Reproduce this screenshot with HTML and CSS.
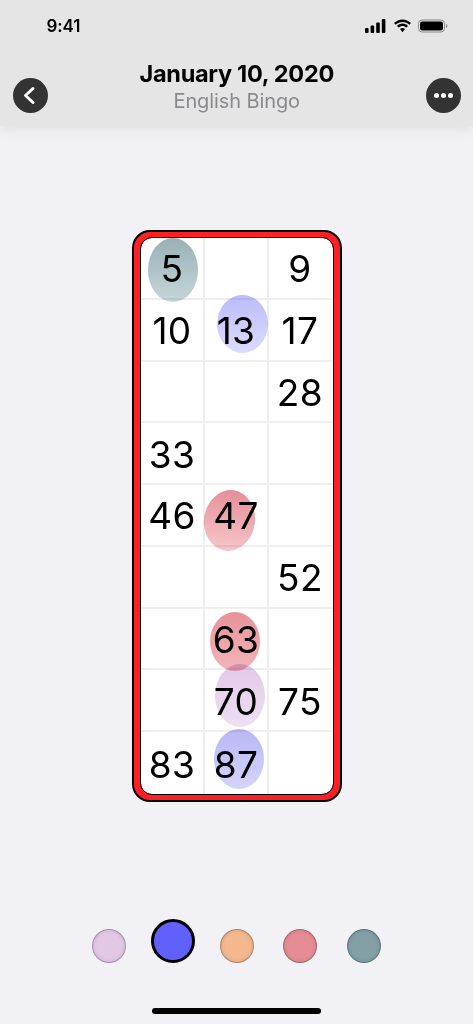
FILE: index.html
```html
<!DOCTYPE html>
<html lang="en">
<head>
<meta charset="utf-8">
<title>English Bingo</title>
<link rel="stylesheet" href="styles.css">
</head>
<body>
<div class="app">
  <header class="header">
    <div class="status">
      <span class="time">9:41</span>
      <span class="status-icons">
        <svg class="signal" width="21" height="14" viewBox="0 0 21 14"><rect x="0" y="9" width="3.6" height="5" rx="1"/><rect x="5.600" y="6.500" width="3.6" height="7.500" rx="1"/><rect x="11.200" y="3.500" width="3.6" height="10.500" rx="1"/><rect x="16.800" y="0" width="3.6" height="14" rx="1"/></svg>
        <svg class="wifi" width="19" height="14" viewBox="0 0 19 14"><path d="M9.500 3c2.600 0 5 1 6.800 2.800L18 4.100C15.800 1.800 12.800.4 9.500.4S3.200 1.800 1 4.100l1.700 1.700C4.500 4 6.900 3 9.500 3z"/><path d="M9.500 7.100c1.500 0 2.800.6 3.800 1.500l1.700-1.700C13.500 5.500 11.600 4.600 9.500 4.600S5.500 5.500 4 6.900l1.700 1.700c1-.9 2.300-1.500 3.800-1.500z"/><path d="M9.500 9.100c-1 0-1.800.4-2.400 1l2.400 3.100 2.400-3.100c-.6-.6-1.400-1-2.400-1z"/></svg>
        <svg class="battery" width="30" height="14" viewBox="0 0 30 14"><rect x=".5" y="1" width="26" height="12" rx="3.600" fill="none" stroke="#8a8a8a"/><rect x="2" y="2.500" width="23" height="9" rx="2.300"/><path d="M28 5v4c.8-.3 1.400-1.100 1.400-2S28.800 5.300 28 5z" fill="#8a8a8a"/></svg>
      </span>
    </div>
    <div class="nav">
      <button class="round-btn" aria-label="Back">
        <svg width="35" height="35" viewBox="0 0 35 35"><path d="M20 10.500l-7.500 7 7.500 7" fill="none" stroke="#fff" stroke-width="3" stroke-linecap="round" stroke-linejoin="round"/></svg>
      </button>
      <div class="titles">
        <div class="title">January 10, 2020</div>
        <div class="subtitle">English Bingo</div>
      </div>
      <button class="round-btn" aria-label="More">
        <svg width="35" height="35" viewBox="0 0 35 35"><circle cx="10.500" cy="17.500" r="2.500" fill="#fff"/><circle cx="17.500" cy="17.500" r="2.500" fill="#fff"/><circle cx="24.500" cy="17.500" r="2.500" fill="#fff"/></svg>
      </button>
    </div>
  </header>

  <main class="main">
    <div class="card">
      <div class="card-inner">
        <div class="board">
          <div class="cell">5</div><div class="cell"></div><div class="cell">9</div>
          <div class="cell">10</div><div class="cell">13</div><div class="cell">17</div>
          <div class="cell"></div><div class="cell"></div><div class="cell">28</div>
          <div class="cell">33</div><div class="cell"></div><div class="cell"></div>
          <div class="cell">46</div><div class="cell">47</div><div class="cell"></div>
          <div class="cell"></div><div class="cell"></div><div class="cell">52</div>
          <div class="cell"></div><div class="cell">63</div><div class="cell"></div>
          <div class="cell"></div><div class="cell">70</div><div class="cell">75</div>
          <div class="cell">83</div><div class="cell">87</div><div class="cell"></div>
          <span class="stain stain-5"></span>
          <span class="stain stain-13"></span>
          <span class="stain stain-47"></span>
          <span class="stain stain-63"></span>
          <span class="stain stain-70"></span>
          <span class="stain stain-87"></span>
        </div>
      </div>
    </div>
  </main>

  <div class="palette">
    <span class="swatch swatch-lilac"></span>
    <span class="swatch swatch-blue"></span>
    <span class="swatch swatch-peach"></span>
    <span class="swatch swatch-rose"></span>
    <span class="swatch swatch-teal"></span>
  </div>
  <div class="home"><span class="home-bar"></span></div>
</div>
</body>
</html>
```
FILE: styles.css
```css
* { box-sizing: border-box; }
html, body { margin: 0; padding: 0; }
body {
  background: #f1f1f6;
  font-family: Inter, "Liberation Sans", sans-serif;
  color: #000;
}
.app {
  width: 473px;
  height: 1024px;
  display: flex;
  flex-direction: column;
  overflow: hidden;
}
.header {
  height: 126px;
  background: #e5e5e5;
  box-shadow: 0 1px 14px rgba(0,0,0,.10);
  display: flex;
  flex-direction: column;
  flex: none;
}
.status {
  height: 58px;
  flex: none;
  padding: 16px 25px 0 46.500px;
  display: flex;
  justify-content: space-between;
  align-items: flex-start;
}
.time {
  font-size: 17px;
  font-weight: 600;
  line-height: 21px;
  letter-spacing: -.1px;
}
.status-icons {
  display: flex;
  align-items: center;
  height: 20px;
}
.status-icons svg { display: block; fill: #000; }
.status-icons .wifi { margin-left: 7px; margin-right: 6px; }
.nav {
  display: flex;
  justify-content: space-between;
  align-items: flex-end;
  padding: 0 12px 15px 12.500px;
  flex: 1;
}
.round-btn {
  width: 35px;
  height: 35px;
  border: 0;
  padding: 0;
  border-radius: 50%;
  background: #333;
  display: block;
}
.round-btn svg { display: block; }
.titles {
  text-align: center;
  align-self: flex-start;
}
.title {
  font-size: 23.500px;
  font-weight: 700;
  line-height: 28px;
  letter-spacing: -.3px;
  margin-top: 2px;
}
.subtitle {
  font-size: 20px;
  font-weight: 400;
  line-height: 24px;
  color: #8a8a8e;
  letter-spacing: -.1px;
  margin-top: 1px;
}
.main {
  padding-top: 104px;
  display: flex;
  justify-content: center;
  flex: none;
}
.card {
  width: 210px;
  height: 572px;
  border: 2px solid #000;
  border-radius: 18px;
  background: #ff2026;
  padding: 6px 7px;
  margin-left: 1px;
}
.card-inner {
  width: 100%;
  height: 100%;
  background: #fff;
  border-radius: 11px;
  outline: 1px solid #000;
  overflow: hidden;
}
.board {
  position: relative;
  display: grid;
  grid-template-columns: 64px 64px 64px;
  grid-template-rows: repeat(9, 1fr);
  height: 100%;
}
.cell {
  display: flex;
  align-items: center;
  justify-content: center;
  padding-top: 2px;
  font-size: 37px;
  font-weight: 400;
  letter-spacing: .4px;
  border-right: 2px solid #efeff2;
  border-bottom: 2px solid #efeff2;
}
.cell:nth-child(3n) { border-right-color: transparent; }
.cell:nth-child(n+25) { border-bottom: 0; }
.stain {
  position: absolute;
  border-radius: 50%;
  width: 50px;
  mix-blend-mode: multiply;
}
.stain-5  { left: 7px;  top: 0;     height: 64px; background: linear-gradient(#98b1b6, #c6d6d8); }
.stain-13 { left: 76px; top: 57px;  width: 51px; height: 58px; background: linear-gradient(#bcbcfb, #dcdcff); }
.stain-47 { left: 63px; top: 252px; width: 51px; height: 61px; transform: rotate(8deg); background: linear-gradient(#e68f97, #f5c6ca); }
.stain-63 { left: 69px; top: 374px; height: 59px; background: linear-gradient(#e8929a, #f2b5b9); }
.stain-70 { left: 74px; top: 426px; height: 63px; background: linear-gradient(#e3c9e8, #eddff3); }
.stain-87 { left: 73px; top: 491px; height: 60px; background: linear-gradient(#b8b8f6, #d4d4fc); }
.palette {
  margin-top: 117px;
  height: 44px;
  display: grid;
  grid-template-columns: repeat(5, 63.750px);
  justify-content: center;
  justify-items: center;
  align-items: end;
  flex: none;
}
.swatch {
  display: block;
  width: 34px;
  height: 34px;
  border-radius: 50%;
  border: 1px solid rgba(0,0,0,.28);
}
.swatch-lilac { background: #e3c8e6; box-shadow: inset 0 0 4px rgba(0,0,0,.12); }
.swatch-blue  { width: 44px; height: 44px; border: 3.500px solid #000; background: #6060fd; }
.swatch-peach { background: #f3b88e; box-shadow: inset 0 0 4px rgba(0,0,0,.12); }
.swatch-rose  { background: #e58c95; box-shadow: inset 0 0 4px rgba(0,0,0,.12); }
.swatch-teal  { background: #82a0a6; box-shadow: inset 0 0 4px rgba(0,0,0,.12); }
.home {
  display: flex;
  justify-content: center;
  padding-top: 45px;
}
.home-bar {
  width: 169px;
  height: 6px;
  border-radius: 3px;
  background: #000;
}
```
